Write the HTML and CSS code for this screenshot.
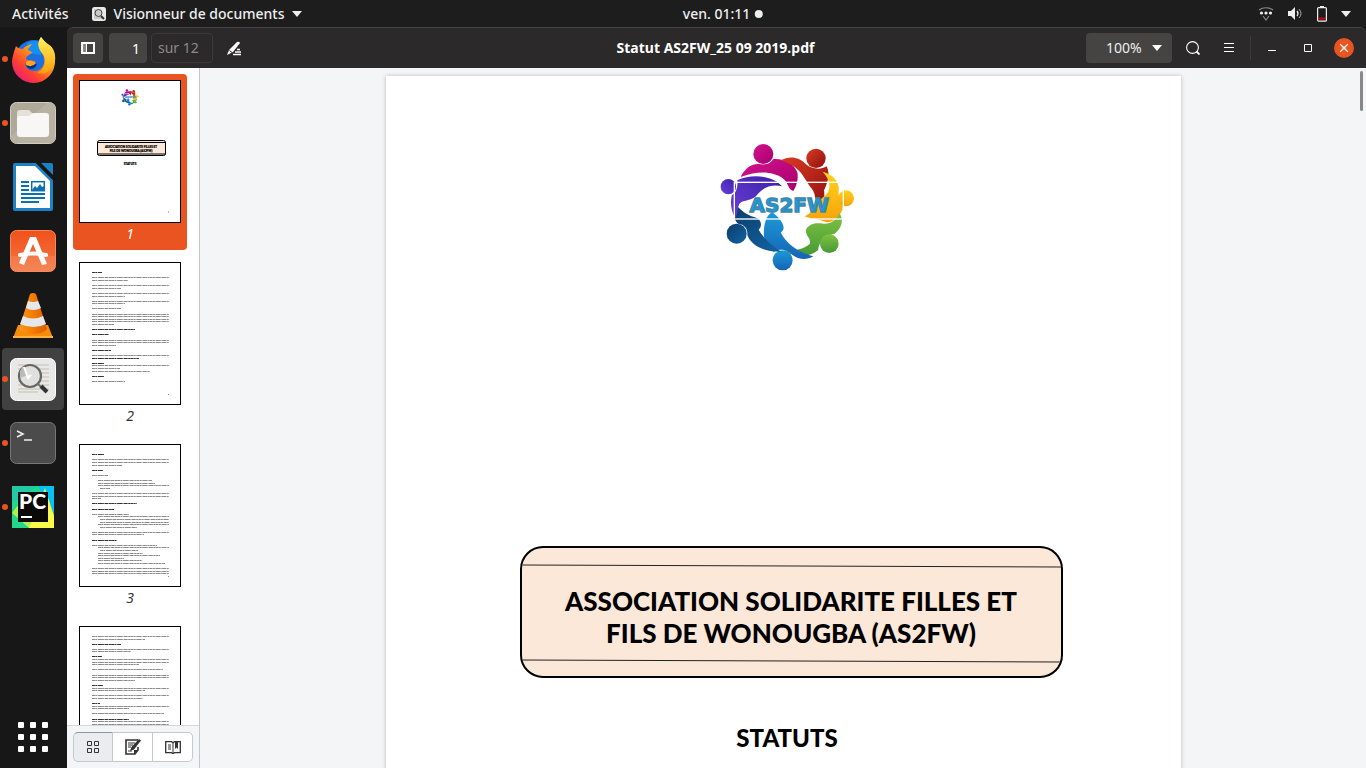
FILE: index.html
```html
<!DOCTYPE html>
<html lang="fr">
<head>
<meta charset="utf-8">
<title>Statut AS2FW_25 09 2019.pdf</title>
<link rel="stylesheet" href="styles.css">
</head>
<body>
<svg class="defs" width="0" height="0" aria-hidden="true">
  <defs>
    <linearGradient id="pink" x1="0" y1="0" x2="1" y2="1"><stop offset="0" stop-color="#d3128f"/><stop offset="1" stop-color="#a8006c"/></linearGradient>
    <linearGradient id="red" x1="0" y1="0" x2="1" y2="1"><stop offset="0" stop-color="#dc3a22"/><stop offset="1" stop-color="#8d1010"/></linearGradient>
    <linearGradient id="yellow" x1="0" y1="0" x2="0" y2="1"><stop offset="0" stop-color="#ffd21c"/><stop offset="1" stop-color="#f4a30c"/></linearGradient>
    <linearGradient id="green" x1="0" y1="0" x2="0" y2="1"><stop offset="0" stop-color="#7fc243"/><stop offset="1" stop-color="#459a35"/></linearGradient>
    <linearGradient id="blue" x1="0" y1="0" x2="0" y2="1"><stop offset="0" stop-color="#1b9ad8"/><stop offset="1" stop-color="#1763b5"/></linearGradient>
    <linearGradient id="navy" x1="0" y1="0" x2="1" y2="1"><stop offset="0" stop-color="#0b3c68"/><stop offset="1" stop-color="#1264a4"/></linearGradient>
    <linearGradient id="violet" x1="0" y1="1" x2="1" y2="0"><stop offset="0" stop-color="#6a3fd8"/><stop offset="1" stop-color="#3d1fa8"/></linearGradient>
    <linearGradient id="ffx" x1=".9" y1="0" x2=".1" y2="1"><stop offset="0" stop-color="#ffe93a"/><stop offset=".4" stop-color="#ff9a1a"/><stop offset=".7" stop-color="#ff4130"/><stop offset="1" stop-color="#e4128c"/></linearGradient>
    <linearGradient id="ffy" x1="0" y1="0" x2="0" y2="1"><stop offset="0" stop-color="#fff35a"/><stop offset="1" stop-color="#ff9f0d"/></linearGradient>
    <linearGradient id="soft" x1="0" y1="0" x2="0" y2="1"><stop offset="0" stop-color="#f1511b"/><stop offset="1" stop-color="#f47742"/></linearGradient>
    <linearGradient id="cone" x1="0" y1="0" x2="1" y2="0"><stop offset="0" stop-color="#f99a1c"/><stop offset=".5" stop-color="#f57c00"/><stop offset="1" stop-color="#d75f00"/></linearGradient>
    <symbol id="logo" viewBox="0 0 465 435">
      <path fill="url(#pink)" d="M92 126C104 98 130 82 152 88C172 90 182 84 190 72C224 70 252 86 262 112C266 134 260 152 250 168C232 162 236 140 216 128C190 112 150 104 92 126Z"/>
      <circle fill="url(#pink)" cx="160" cy="57" r="30"/>
      <path fill="url(#red)" d="M212 76C236 62 268 64 288 88C306 104 334 104 350 94C362 118 352 146 342 166C346 190 338 214 324 230C314 206 320 180 306 162C280 130 276 96 212 76Z"/>
      <circle fill="url(#red)" cx="318" cy="70" r="29"/>
      <path fill="url(#yellow)" d="M338 110C368 118 390 140 386 168C384 186 392 204 400 212C396 240 372 262 350 262C330 252 304 254 284 244C310 234 316 202 340 186C366 168 364 138 338 110Z"/>
      <circle fill="url(#yellow)" cx="408" cy="190" r="24"/>
      <path fill="url(#green)" d="M222 346C244 366 292 372 324 346C328 318 342 302 374 296C396 280 402 252 388 234C378 256 362 268 340 266C320 262 296 266 288 284C284 302 308 314 298 328C280 344 250 348 222 346Z"/>
      <circle fill="url(#green)" cx="358" cy="326" r="28"/>
      <path fill="url(#blue)" d="M186 232C162 244 158 292 164 316C170 336 178 344 190 350C214 338 238 346 248 360C266 374 290 376 310 364C262 352 226 322 212 292C236 280 206 244 186 232Z"/>
      <circle fill="url(#blue)" cx="218" cy="376" r="30"/>
      <path fill="url(#navy)" d="M76 206C68 232 72 256 84 266C104 268 114 282 112 300C124 334 168 352 214 350C182 332 158 306 146 284C160 270 152 250 132 246C112 240 90 226 76 206Z"/>
      <circle fill="url(#navy)" cx="80" cy="296" r="30"/>
      <path fill="url(#violet)" d="M82 136C122 116 190 120 216 154C190 148 164 154 144 176C128 200 100 192 88 206C82 220 84 234 76 250C62 226 60 200 66 180C80 172 84 154 82 136Z"/>
      <circle fill="url(#violet)" cx="55" cy="155" r="23"/>
      <rect x="73" y="142" width="327" height="110" fill="none" stroke="#fff" stroke-width="4"/>
      <text class="logo-text" x="238" y="232" text-anchor="middle">AS2FW</text>
    </symbol>
  </defs>
</svg>

<header class="topbar">
  <button class="top-btn">Activités</button>
  <button class="top-btn app-menu">
    <svg width="16" height="16" viewBox="0 0 16 16"><rect x="1" y="1" width="14" height="14" rx="2.500" fill="#e9e9e7"/><path d="M3 4h2M3 6h1M3 8h1M3 10h2M3 12h8" stroke="#aaa"/><circle cx="7.500" cy="7" r="3.500" fill="#ccc" stroke="#444"/><path d="M10 10l3 3" stroke="#333" stroke-width="2"/></svg>
    Visionneur de documents
    <svg width="10" height="6" viewBox="0 0 10 6"><path d="M0 0h10L5 6z" fill="#eee"/></svg>
  </button>
  <button class="top-btn clock">ven. 01:11 <span class="clock-dot"></span></button>
  <button class="top-btn tray" aria-label="Système">
    <svg width="16" height="14" viewBox="0 0 16 14"><path d="M1 3C5 0 11 0 15 3M5 9l3 4 3-4" fill="none" stroke="#888" stroke-width="1.200"/><circle cx="3.500" cy="6" r="1.600" fill="#eee"/><circle cx="8" cy="6" r="1.600" fill="#eee"/><circle cx="12.500" cy="6" r="1.600" fill="#eee"/></svg>
    <svg width="15" height="14" viewBox="0 0 15 14"><path d="M0 4h3l4-4v13L3 9H0z" fill="#eee"/><path d="M9 4q2 2.500 0 5" fill="none" stroke="#eee" stroke-width="1.300"/><path d="M11 2q4 4.500 0 9" fill="none" stroke="#aaa"/></svg>
    <svg width="10" height="16" viewBox="0 0 10 16"><path d="M3 0h4v2H3z" fill="#eee"/><rect x=".6" y="1.600" width="8.800" height="13.600" rx="1" fill="none" stroke="#eee" stroke-width="1.200"/><path d="M2 11.500h6v2H2z" fill="#d00"/></svg>
    <svg width="10" height="6" viewBox="0 0 10 6"><path d="M0 0h10L5 6z" fill="#eee"/></svg>
  </button>
</header>

<div class="desktop">
  <nav class="dock" aria-label="Applications">
    <button class="dock-item running" aria-label="Firefox">
      <svg viewBox="0 0 48 48"><circle cx="25" cy="24" r="19" fill="#1b6fe0"/><path d="M18 8q10-5 16 2l-2 10-12-2z" fill="#1590f0"/><path d="M7 11C5 17 3 22 3 27A21.500 21.500 0 0 0 46 26C47 18 44 12 40 10C36 7 34 5 32 2C28 8 29 13 33 18C37 24 36 32 30 35C23 38 16 34 16 28C19 31 23 30 27 27C23 24 20 27 17 24C17 21 20 20 23 18C23 16 19 16 19 14L23 9C18 10 15 12 14 14Q9 14 7 11Z" fill="url(#ffx)"/><path d="M32 2C28 8 29 13 33 18C39 25 36 34 28 38C40 41 47 31 46 22C45 15 42 11 40 10C36 7 34 5 32 2Z" fill="url(#ffy)"/><path d="M17 29q6 3 11-1q-1 6-7 6q-4-2-4-5z" fill="#0b2d80"/><path d="M17 27q4-3 8 0t2 1q-4 5-10 2z" fill="#ffa321"/></svg>
    </button>
    <button class="dock-item running" aria-label="Fichiers">
      <svg viewBox="0 0 48 48"><rect x="1.500" y="3.500" width="45" height="41" rx="6" fill="#aea998" stroke="#d1cdc0"/><path d="M2 37L38 4h4q4 1 4 5v30q0 5-5 5H7q-5 0-5-5z" fill="#b7b2a2"/><path d="M8 14q0-3 3-3h8q2 0 3 2l2 2h10v10H8z" fill="#e4e1da"/><path d="M8 19q0-2 2-2h10l4-3h13q3 0 3 3v18q0 3-3 3H11q-3 0-3-3z" fill="#f8f7f5"/></svg>
    </button>
    <button class="dock-item" aria-label="LibreOffice Writer">
      <svg viewBox="0 0 48 48"><path d="M4 2q0-2 2-2h21l17 17v29q0 2-2 2H6q-2 0-2-2z" fill="#1b83c5"/><path d="M7 3h19l15 15v27H7z" fill="#fff"/><path d="M27 0h5l12 12v5z" fill="#171717"/><path d="M32 0h10q2 0 2 2v10z" fill="#1b83c5"/><path d="M12 19h8M12 23h8M12 27h8M12 31h24M12 35h24M12 39h18" stroke="#0c70ac" stroke-width="2"/><rect x="22.700" y="18.700" width="12.600" height="9" fill="#fff" stroke="#0c70ac" stroke-width="1.500"/><path d="M23 27l3-4 2 2 3-4 2 3 2-1v4z" fill="#0c70ac"/></svg>
    </button>
    <button class="dock-item" aria-label="Logiciels Ubuntu">
      <svg viewBox="0 0 48 48"><rect x="1.500" y="3.500" width="45" height="41" rx="6" fill="url(#soft)" stroke="#f58a61"/><path d="M2 29h44v10q0 5-5 5H7q-5 0-5-5z" fill="#fff" opacity=".1"/><path d="M21 10h6l11 27-5 1-9-21-9 21-5-2z" fill="#fff"/><path d="M11 28q13-3 26 0" fill="none" stroke="#fff" stroke-width="4" stroke-linecap="round"/></svg>
    </button>
    <button class="dock-item" aria-label="VLC">
      <svg viewBox="0 0 48 48"><path d="M9 34h30l5 13H4z" fill="#f78b0b"/><path d="M4 45h40v2H4z" fill="#ffb13b"/><path d="M21 3q3-2 6 0l11 35q-4 5-14 5t-14-5z" fill="url(#cone)"/><path d="M19 10q5 2 10 0l3 7q-8 4-15 0zM14 25q10 5 20 0l3 8q-12 6-26 0z" fill="#e4e8ec"/></svg>
    </button>
    <button class="dock-item running active" aria-label="Visionneur de documents">
      <svg viewBox="0 0 48 48"><rect x="1.500" y="3.500" width="45" height="42" rx="6" fill="#e8e8e7" stroke="#fff"/><path d="M9 10h31M9 14h31M9 18h31M9 22h31M9 26h31M9 30h31M9 34h31M9 37h20" stroke="#c6bfab"/><circle cx="21" cy="21" r="11" fill="#e0e0df" stroke="#666" stroke-width="2.200"/><path d="M11 16l3-5 5 9-8 3z" fill="#bbb"/><path d="M15 12l4 11 3-3" fill="none" stroke="#fff" stroke-width="2"/><path d="M29 29l3 3" stroke="#777" stroke-width="2"/><path d="M32 31l6 6" stroke="#333" stroke-width="4"/></svg>
    </button>
    <button class="dock-item running" aria-label="Terminal">
      <svg viewBox="0 0 48 48"><rect x="1.500" y="3.500" width="45" height="41" rx="6" fill="#4b4b4b" stroke="#777"/><path d="M8 12l6 3-6 3M15 21h8" fill="none" stroke="#eee" stroke-width="1.600"/></svg>
    </button>
    <button class="dock-item running" aria-label="PyCharm">
      <svg viewBox="0 0 48 48"><path d="M3 3h42v42H3z" fill="#21d789"/><path d="M3 30L20 8l25 22v15H20z" fill="#b5ee4f"/><path d="M29 3h16v30z" fill="#07c3f2"/><path d="M20 45l16-40 9 28v12z" fill="#fcf84a"/><path d="M3 3h26L3 20z" fill="#21c9a4"/><path d="M9 9h30v30H9z" fill="#0a0a0a"/><path d="M12 33h11v2H12z" fill="#fff"/><text class="pc-text" x="10" y="26">PC</text></svg>
    </button>
    <button class="apps-btn" aria-label="Afficher les applications">
      <svg width="30" height="30" viewBox="0 0 30 30" fill="#fff"><rect width="6" height="6" rx="1"/><rect x="12" width="6" height="6" rx="1"/><rect x="24" width="6" height="6" rx="1"/><rect y="12" width="6" height="6" rx="1"/><rect x="12" y="12" width="6" height="6" rx="1"/><rect x="24" y="12" width="6" height="6" rx="1"/><rect y="24" width="6" height="6" rx="1"/><rect x="12" y="24" width="6" height="6" rx="1"/><rect x="24" y="24" width="6" height="6" rx="1"/></svg>
    </button>
  </nav>

  <main class="window">
    <header class="headerbar">
      <div class="bar-start">
        <button class="tool filled" aria-label="Panneau latéral"><svg width="14" height="12" viewBox="0 0 14 12"><path d="M1 1h12v10H1z" fill="none" stroke="#fff" stroke-width="2"/><path d="M5.500 1v10" stroke="#fff"/><path d="M2 2h3v8H2z" fill="#888"/></svg></button>
        <input class="page-input" type="text" value="1" aria-label="Page">
        <span class="page-total">sur 12</span>
        <button class="tool annotate" aria-label="Annoter"><svg width="15" height="15" viewBox="0 0 15 15"><path d="M0 14l2-5L10 1q2-1 3 1L6 11z" fill="#fff"/><path d="M2.500 9.500l2.500 2" stroke="#2b2929"/><path d="M10 8.500h3M8 11h6M6 13.500h8" stroke="#fff" stroke-width="1.300"/></svg></button>
      </div>
      <h1 class="title">Statut AS2FW_25 09 2019.pdf</h1>
      <div class="bar-end">
        <div class="zoom-box">
          <select class="zoom" aria-label="Zoom"><option>100%</option></select>
          <svg class="zoom-arrow" width="10" height="6" viewBox="0 0 10 6"><path d="M0 0h10L5 6z" fill="#fff"/></svg>
        </div>
        <button class="tool search" aria-label="Rechercher"><svg width="14" height="14" viewBox="0 0 14 14" fill="none" stroke="#fff"><circle cx="6.500" cy="6.500" r="5.900" stroke-width="1.100"/><path d="M10.500 10.500l3 3" stroke-width="1.800"/></svg></button>
        <button class="tool" aria-label="Menu"><svg width="10" height="10" viewBox="0 0 10 10"><path d="M0 .5h10M0 4.500h10M0 8.500h10" stroke="#fff"/></svg></button>
        <span class="separator"></span>
        <button class="win-btn" aria-label="Réduire"><svg width="8" height="8" viewBox="0 0 8 8"><path d="M0 6.500h8" stroke="#fff"/></svg></button>
        <button class="win-btn" aria-label="Agrandir"><svg width="8" height="8" viewBox="0 0 8 8"><path d="M.5.5h7v7h-7z" fill="none" stroke="#fff"/></svg></button>
        <button class="win-btn close" aria-label="Fermer"><svg width="8" height="8" viewBox="0 0 8 8"><path d="M0 0l8 8M8 0L0 8" stroke="#fff" stroke-width="1.300"/></svg></button>
      </div>
    </header>

    <div class="content">
      <aside class="sidebar">
        <div class="thumbs">
          <a class="thumb selected" href="#page">
            <svg class="sheet" viewBox="0 0 102 143">
              <use href="#logo" x="41" y="8" width="20" height="19"/>
              <rect x="18.500" y="60.500" width="68" height="15" rx="2" fill="#fce8d9" stroke="#000"/>
              <path d="M18 62.500h69M18 74h69" stroke="#000"/>
              <text class="mini-text" x="52" y="68">ASSOCIATION SOLIDARITE FILLES ET</text>
              <text class="mini-text" x="52" y="72">FILS DE WONOUGBA (AS2FW)</text>
              <text class="mini-text" x="51" y="85">STATUTS</text>
              <path d="M89 132h1" stroke="#777"/>
            </svg>
            <span class="thumb-label">1</span>
          </a>
          <a class="thumb" href="#page2">
            <svg class="sheet" viewBox="0 0 102 143">
              <path class="lines" d="M13 15.500h77M13 18.500h36M13 23.500h77M13 26.500h29M13 31.500h77M13 34.500h33M13 39.500h77M13 41.500h33M13 46.500h29M13 52.500h77M13 54.500h77M13 57.500h77M13 59.500h77M13 62.500h22M13 78.500h77M13 80.500h77M13 83.500h24M13 93.500h77M13 103.500h77M13 106.500h28M13 109.500h58M13 119.500h33M89 132.500h1"/>
              <path class="lines strong" d="M13 10.500h10M13 67.500h43M13 72.500h17M13 88.500h19M13 96.500h47M13 101.500h12M13 114.500h12"/>
            </svg>
            <span class="thumb-label">2</span>
          </a>
          <a class="thumb" href="#page3">
            <svg class="sheet" viewBox="0 0 102 143">
              <path class="lines" d="M13 15.500h77M13 18.500h77M13 21.500h30M13 31.500h16M19 36.500h54M19 39.500h57M19 41.500h71M21 44.500h10M13 49.500h77M13 52.500h77M13 54.500h9M13 70.500h37M19 72.500h71M21 75.500h69M21 78.500h69M19 80.500h71M21 83.500h37M13 88.500h77M13 90.500h52M13 101.500h65M19 103.500h71M21 106.500h38M19 109.500h45M19 111.500h62M19 114.500h26M19 116.500h44M19 119.500h67M13 124.500h77M13 127.500h77M13 129.500h77M89 132.500h1"/>
              <path class="lines strong" d="M13 10.500h12M13 26.500h11M13 59.500h45M13 65.500h22M13 96.500h25"/>
            </svg>
            <span class="thumb-label">3</span>
          </a>
          <a class="thumb" href="#page4" aria-label="4">
            <svg class="sheet" viewBox="0 0 102 143">
              <path class="lines" d="M13 10.500h77M13 13.500h53M13 23.500h77M13 25.500h39M13 33.500h77M13 36.500h77M13 38.500h47M13 43.500h71M13 49.500h77M13 51.500h77M13 54.500h43M13 62.500h77M13 64.500h53M13 69.500h77M13 72.500h51M13 80.500h77M13 82.500h37M13 87.500h72M13 95.500h77M13 98.500h77"/>
              <path class="lines strong" d="M13 18.500h29M13 30.500h10M13 59.500h11M13 77.500h8M13 93.500h37"/>
            </svg>
          </a>
        </div>
        <div class="modes">
          <button class="mode on" aria-label="Vignettes"><svg width="12" height="12" viewBox="0 0 12 12" fill="none" stroke="#333"><path d="M.5.5h4v4h-4zM7.500.5h4v4h-4zM.5 7.500h4v4h-4zM7.500 7.500h4v4h-4z"/></svg></button>
          <button class="mode" aria-label="Annotations"><svg width="16" height="16" viewBox="0 0 16 16"><path d="M13 1H1v14h9l3-4V8" fill="none" stroke="#333" stroke-width="1.600"/><path d="M9 15v-4h4z" fill="#333"/><path d="M3 4h7M3 6h5M3 8h3M3 12h4" stroke="#333"/><path d="M16 1.500L14 0 6.500 8 5 12l4-1.500z" fill="#333"/></svg></button>
          <button class="mode" aria-label="Signets"><svg width="16" height="13" viewBox="0 0 16 13"><path d="M.7.7h5.800l1.500 1 1.500-1h5.800v11H9.500l-1.500 1-1.500-1H.7z" fill="none" stroke="#333" stroke-width="1.300"/><path d="M8 2v10" stroke="#333"/><path d="M3 4h3M3 6h3M3 8h3" stroke="#333"/><path d="M10 0h3v8l-1.500-1.500L10 8z" fill="#333"/></svg></button>
        </div>
      </aside>

      <section class="viewer">
        <article class="page" id="page">
          <svg class="page-logo" width="155" height="145" role="img" aria-label="AS2FW"><use href="#logo"/></svg>
          <div class="banner">
            <svg class="rule" height="20" viewBox="0 0 539 20" preserveAspectRatio="none"><path d="M0 17L539 19" stroke="#222"/></svg>
            <h2 class="banner-text">ASSOCIATION SOLIDARITE FILLES ET<br>FILS DE WONOUGBA (AS2FW)</h2>
            <svg class="rule" height="18" viewBox="0 0 539 18" preserveAspectRatio="none"><path d="M0 2L539 4" stroke="#222"/></svg>
          </div>
          <h3 class="statuts">STATUTS</h3>
        </article>
        <span class="scroll-thumb"></span>
      </section>
    </div>
  </main>
</div>
</body>
</html>
```

FILE: styles.css
```css
* { box-sizing: border-box; }

body {
  margin: 0;
  height: 100vh;
  display: flex;
  flex-direction: column;
  overflow: hidden;
  background: #171717;
  color: #eee;
  font: 14px/20px "Noto Sans", "Open Sans", sans-serif;
}

svg { display: block; flex: none; }

.defs { position: absolute; }

button {
  padding: 0;
  border: 0;
  background: none;
  color: inherit;
  font: inherit;
}

/* Top panel */
.topbar {
  flex: none;
  height: 27px;
  display: flex;
  position: relative;
  align-items: center;
  padding: 0 15px 0 12px;
  background: #1d1d1d;
}

.top-btn {
  display: flex;
  align-items: center;
  font-weight: 500;
  white-space: nowrap;
}

.app-menu { margin-left: 22px; gap: 7px; }

.clock {
  position: absolute;
  left: 50%;
  transform: translateX(-50%);
  margin-left: 40px;
  gap: 5px;
}

.clock-dot {
  width: 8px;
  height: 8px;
  border-radius: 50%;
  background: #eee;
}

.tray { margin-left: auto; gap: 14px; }

/* Dock */
.desktop { flex: 1; min-height: 0; display: flex; }

.dock {
  flex: none;
  width: 67px;
  display: flex;
  flex-direction: column;
  gap: 2px;
  padding: 1px 3px 16px 2px;
  background: #171717;
}

.dock-item {
  position: relative;
  width: 62px;
  height: 62px;
  display: grid;
  place-items: center;
  border-radius: 4px;
}

.dock-item svg { width: 48px; height: 48px; }

.dock-item.active { background: #414141; }

.running::before {
  content: "";
  position: absolute;
  left: 0;
  top: 28px;
  width: 6px;
  height: 6px;
  border-radius: 50%;
  background: #e95420;
}

.apps-btn { margin: auto auto 0; }

.pc-text { font: 900 21px Lato, sans-serif; fill: #fff; }

/* Window */
.window { flex: 1; min-width: 0; display: flex; flex-direction: column; }

.headerbar {
  flex: none;
  height: 41px;
  display: grid;
  grid-template-columns: 1fr auto 1fr;
  align-items: center;
  padding: 0 12px 0 6px;
  background: #2b2929;
  border-top: 1px solid #454343;
  border-radius: 6px 6px 0 0;
}

.bar-start, .bar-end { display: flex; align-items: center; }

.bar-end { justify-content: flex-end; }

.title {
  margin: 0;
  padding-left: 4px;
  font-size: 14px;
  line-height: 20px;
  font-weight: 700;
  color: #fff;
}

.tool {
  width: 30px;
  height: 30px;
  display: grid;
  place-items: center;
  border-radius: 4px;
}

.filled { background: #454442; }

.page-input {
  width: 38px;
  height: 30px;
  margin: 0 4px 0 6px;
  padding: 0 7px;
  border: 0;
  border-radius: 4px;
  background: #454442;
  color: #fff;
  font: inherit;
  text-align: right;
}

.page-total {
  width: 62px;
  height: 30px;
  padding: 4px 6px;
  border: 1px solid #3b3939;
  border-radius: 4px;
  color: #8b8a89;
}

.annotate { margin-left: 6px; }

.zoom-box { position: relative; }

.zoom {
  width: 86px;
  height: 30px;
  padding: 0 20px;
  border: 0;
  border-radius: 4px;
  background: #454442;
  color: #eee;
  font: inherit;
  appearance: none;
}

.zoom-arrow {
  position: absolute;
  right: 10px;
  top: 12px;
  pointer-events: none;
}

.search { margin: 0 6px; }

.separator { width: 1px; height: 24px; margin: 0 11px 0 6px; background: #3b3939; }

.win-btn {
  width: 20px;
  height: 20px;
  margin-left: 16px;
  display: grid;
  place-items: center;
  border-radius: 50%;
}

.separator + .win-btn { margin-left: 0; }

.close { background: #e95420; }

/* Sidebar */
.content { flex: 1; min-height: 0; display: flex; background: #f4f5f7; }

.sidebar {
  flex: none;
  width: 133px;
  display: flex;
  flex-direction: column;
  border-right: 1px solid #c3c7cd;
}

.thumbs {
  flex: 1;
  min-height: 0;
  display: flex;
  flex-direction: column;
  align-items: flex-start;
  gap: 6px;
  padding: 6px;
  overflow: hidden;
  background: #fff;
}

.thumb {
  flex: none;
  padding: 6px;
  border-radius: 4px;
  color: #333;
  text-align: center;
  text-decoration: none;
}

.selected { background: #e95420; color: #fff; }

.sheet {
  width: 102px;
  height: 143px;
  background: #fff;
  outline: 1px solid #000;
  outline-offset: -1px;
}

.thumb-label { display: block; line-height: 21px; font-style: italic; }

.lines {
  fill: none;
  stroke: #8c8c8c;
  stroke-width: 1;
  stroke-dasharray: 3 .3 2 .6 5 .2 1 .4 4 .5 2 .2;
}

.strong { stroke: #333; }

.mini-text {
  font: 900 3px Lato, sans-serif;
  text-anchor: middle;
  fill: #000;
  stroke: #000;
  stroke-width: .2px;
}

.modes {
  flex: none;
  display: flex;
  padding: 6px;
  border-top: 1px solid #d5d8dc;
}

.mode {
  flex: 0 0 40px;
  height: 30px;
  display: grid;
  place-items: center;
  border: 1px solid #c3c9d1;
  border-left-width: 0;
  background: #fff;
}

.mode:first-child { border-left-width: 1px; border-radius: 5px 0 0 5px; }

.mode:last-child { border-radius: 0 5px 5px 0; }

.mode.on { background: #ebecef; border-top-color: #8796a8; }

/* Document */
.viewer {
  flex: 1;
  min-width: 0;
  position: relative;
  padding: 8px;
  overflow: hidden;
}

.page {
  max-width: 795px;
  min-height: 1123px;
  margin: 0 auto;
  padding: 59px 0 0 8px;
  display: flex;
  flex-direction: column;
  align-items: center;
  background: #fff;
  color: #000;
  box-shadow: 0 0 4px rgba(0, 0, 0, .25);
}

.logo-text {
  font: bold 60px "DejaVu Sans", sans-serif;
  fill: #1d9ad6;
  stroke: #3f86ad;
  stroke-width: 4px;
}

.banner {
  width: 100%;
  max-width: 543px;
  margin: 266px 0 0 8px;
  border: 2px solid #000;
  border-radius: 23px;
  background: #fce8d9;
  overflow: hidden;
}

.rule { width: 100%; }

.banner-text {
  margin: 0;
  padding: 17px 0 9px;
  font: 900 26px/32px Lato, sans-serif;
  text-align: center;
}

.statuts { margin: 44px 0 0; font: 900 24px/32px Lato, sans-serif; }

.scroll-thumb {
  position: absolute;
  top: 3px;
  right: 3px;
  width: 3px;
  height: 40px;
  border-radius: 2px;
  background: #888;
}
```
